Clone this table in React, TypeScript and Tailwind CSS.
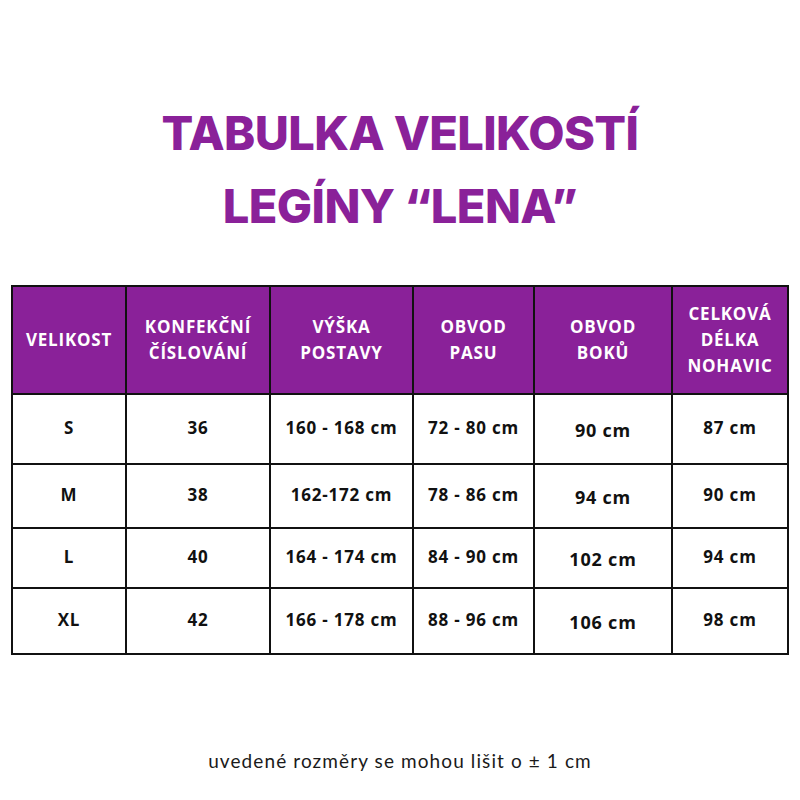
const headers = [
  ['VELIKOST'],
  ['KONFEKČNÍ', 'ČÍSLOVÁNÍ'],
  ['VÝŠKA', 'POSTAVY'],
  ['OBVOD', 'PASU'],
  ['OBVOD', 'BOKŮ'],
  ['CELKOVÁ', 'DÉLKA', 'NOHAVIC'],
]

const widths = ['w-[114px]', 'w-[144px]', 'w-[143px]', 'w-[121px]', 'w-[138px]', 'w-[116px]']

const rows = [
  { h: 'h-[70px]', cells: ['S', '36', '160 - 168 cm', '72 - 80 cm', '90 cm', '87 cm'] },
  { h: 'h-[64px]', cells: ['M', '38', '162-172 cm', '78 - 86 cm', '94 cm', '90 cm'] },
  { h: 'h-[60px]', cells: ['L', '40', '164 - 174 cm', '84 - 90 cm', '102 cm', '94 cm'] },
  { h: 'h-[66px]', cells: ['XL', '42', '166 - 178 cm', '88 - 96 cm', '106 cm', '98 cm'] },
]

export default function App() {
  return (
    <div className="w-[800px] h-[800px] bg-white flex flex-col items-center">
      {/* title */}
      <div className="mt-[96px] text-center text-[#8a2199] font-['Inter',sans-serif] font-extrabold text-[47px] leading-[73px] tracking-[-0.6px]">
        <div>TABULKA VELIKOSTÍ</div>
        <div>LEGÍNY “LENA”</div>
      </div>

      {/* size table */}
      <table className="mt-[43px] border-collapse border-2 border-[#111] font-['Open_Sans',sans-serif] font-bold text-center tracking-[0.8px]">
        <thead>
          <tr className="h-[108px] bg-[#8a2199] text-white text-[17px] leading-[26px]">
            {headers.map((lines, i) => (
              <th key={i} className={`${widths[i]} border-2 border-[#111] font-bold`}>
                {lines.map((l) => (
                  <div key={l}>{l}</div>
                ))}
              </th>
            ))}
          </tr>
        </thead>
        <tbody>
          {rows.map((r, ri) => (
            <tr key={ri} className={`${r.h} text-[#111] text-[17px]`}>
              {r.cells.map((c, ci) => (
                <td
                  key={ci}
                  className={`border-2 border-[#111] ${ci === 4 ? 'text-[18px] pt-[3px]' : 'pb-[2px]'}`}
                >
                  {c}
                </td>
              ))}
            </tr>
          ))}
        </tbody>
      </table>

      <div className="mt-[92px] font-['Lato',sans-serif] font-normal text-[19px] text-[#1a1a1a] tracking-[1.1px]">
        uvedené rozměry se mohou lišit o ± 1 cm
      </div>
    </div>
  )
}
